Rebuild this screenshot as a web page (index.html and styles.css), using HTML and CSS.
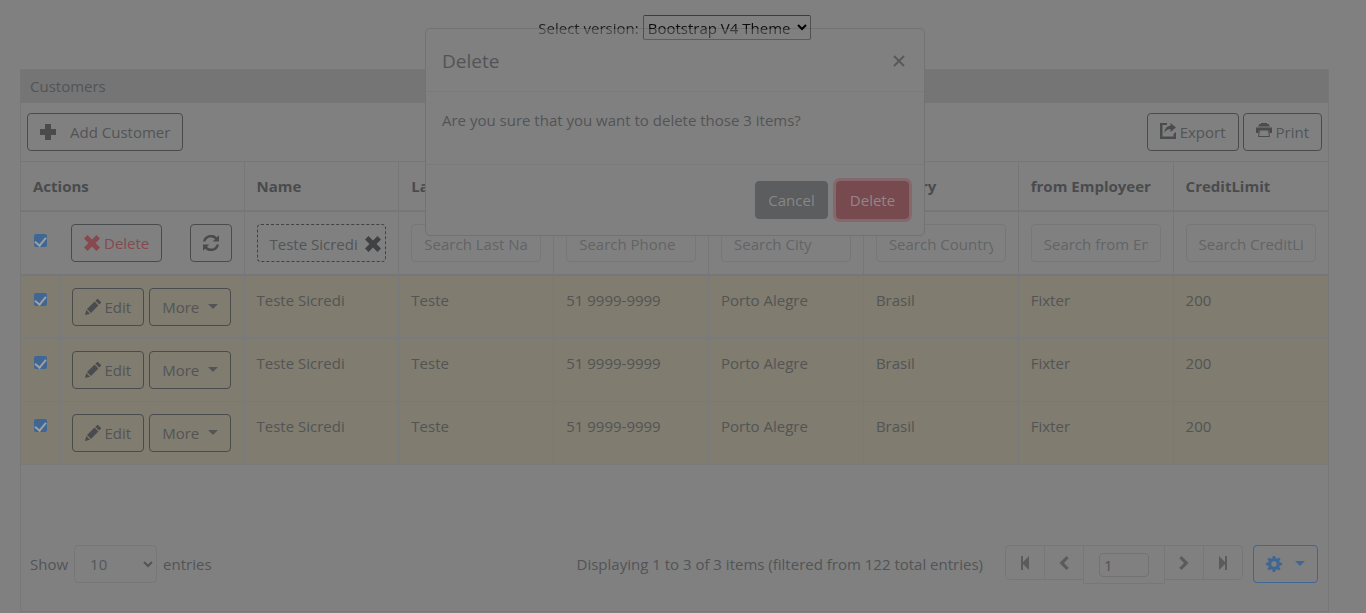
FILE: index.html
```html
<!DOCTYPE html>
<html lang="en">
<head>
<meta charset="utf-8">
<title>Customers</title>
<link rel="stylesheet" href="styles.css">
</head>
<body>
<svg class="defs" aria-hidden="true">
  <symbol id="plus" viewBox="0 0 16 16"><path d="M5 0h6v5h5v6h-5v5H5v-5H0V5h5z"/></symbol>
  <symbol id="cross" viewBox="0 0 16 16"><path d="M3.500 0 8 4.500 12.500 0 16 3.500 11.500 8 16 12.500 12.500 16 8 11.500 3.500 16 0 12.500 4.500 8 0 3.500z"/></symbol>
  <symbol id="refresh" viewBox="0 0 16 16"><path d="M0 6.500A8 8 0 0 1 13.700 2.300L16 .2V6.500H9.700l2.300-2.300A5.700 5.700 0 0 0 2.400 6.500zM16 9.500A8 8 0 0 1 2.300 13.700L0 15.800V9.500h6.300L4 11.800A5.700 5.700 0 0 0 13.600 9.500z"/></symbol>
  <symbol id="pencil" viewBox="0 0 16 16"><path d="M0 16l1.300-5L5 14.700zM2 10l7.600-7.400 3.800 3.800L6 14zM10.400 1.800 12.200 0H13l3 3v.8l-1.800 1.800z"/></symbol>
  <symbol id="export" viewBox="0 0 16 16"><path d="M0 0h7v2H2.500v11.500h11V11L16 9v7H0z"/><path d="M10.500 0 16 4.500 10.500 9V6C7.500 6 6 7.500 4.500 10 4.500 6 6.500 3 10.500 2.800z"/></symbol>
  <symbol id="print" viewBox="0 0 16 16"><path d="M5 0h6v1h1.500L14 3.500H2L3.500 1H5zM0 4.500h16V10h-2.500L13 7.500H3L2.500 10H0z"/><path d="M3.500 7.500 2.500 13.500h11l-1-6" fill="none" stroke="currentColor"/></symbol>
  <symbol id="first" viewBox="0 0 16 16"><path d="M4 1h2v6l6-6v14L6 9v6H4z"/></symbol>
  <symbol id="last" viewBox="0 0 16 16"><path d="M12 1h-2v6L4 1v14l6-6v6h2z"/></symbol>
  <symbol id="prev" viewBox="0 0 16 16"><path d="m10.500 1 2.200 2.200L8 8l4.700 4.800-2.200 2.200-7-7z"/></symbol>
  <symbol id="next" viewBox="0 0 16 16"><path d="M5.500 1 3.300 3.200 8 8l-4.700 4.800L5.500 15l7-7z"/></symbol>
  <symbol id="gear" viewBox="0 0 16 16"><path fill-rule="evenodd" d="M6.700 0h2.600l.4 2.200 1.400.6L13 1.500 14.600 3.200 13.200 5l.6 1.400 2.200.4v2.500l-2.200.4-.6 1.400 1.400 1.800-1.700 1.700-1.800-1.400-1.400.6L9.300 16H6.700l-.4-2.200-1.400-.6-1.800 1.400-1.700-1.700 1.400-1.800-.6-1.400L0 9.300V6.800l2.200-.4L2.800 5 1.400 3.200l1.700-1.700 1.800 1.300 1.400-.6zM8 5.300a2.700 2.700 0 1 0 0 5.400 2.700 2.700 0 0 0 0-5.400z"/></symbol>
  <symbol id="chevron" viewBox="0 0 10 8"><path d="M1 2l4 4 4-4" fill="none" stroke="currentColor" stroke-width="2"/></symbol>
</svg>

<div class="version">
  <label for="version">Select version:</label>
  <span class="select-box version-box"><select id="version"><option>Bootstrap V4 Theme</option></select><svg class="arrow"><use href="#chevron"/></svg></span>
</div>

<main class="panel">
  <h1 class="panel-title">Customers</h1>
  <div class="toolbar">
    <button class="btn add"><svg class="icon"><use href="#plus"/></svg>Add Customer</button>
    <div class="tools">
      <button class="btn"><svg class="icon raised"><use href="#export"/></svg>Export</button>
      <button class="btn"><svg class="icon raised"><use href="#print"/></svg>Print</button>
    </div>
  </div>
  <table class="grid">
    <colgroup><col class="col-check"><col class="col-actions"><col><col><col><col><col><col><col></colgroup>
    <thead>
      <tr><th colspan="2">Actions</th><th>Name</th><th>Last Name</th><th>Phone</th><th>City</th><th>Country</th><th>from Employeer</th><th>CreditLimit</th></tr>
      <tr class="filters">
        <td colspan="2"><div class="bulk"><input type="checkbox" class="check" aria-label="Select all" checked><button class="btn danger-text"><svg class="icon"><use href="#cross"/></svg>Delete</button><button class="btn refresh" aria-label="Refresh"><svg class="icon"><use href="#refresh"/></svg></button></div></td>
        <td><button class="filter-tag">Teste Sicredi<svg class="icon"><use href="#cross"/></svg></button></td>
        <td><input class="search" aria-label="Search Last Name" placeholder="Search Last Name"></td>
        <td><input class="search" aria-label="Search Phone" placeholder="Search Phone"></td>
        <td><input class="search" aria-label="Search City" placeholder="Search City"></td>
        <td><input class="search" aria-label="Search Country" placeholder="Search Country"></td>
        <td><input class="search" aria-label="Search from Employeer" placeholder="Search from Employeer"></td>
        <td><input class="search" aria-label="Search CreditLimit" placeholder="Search CreditLimit"></td>
      </tr>
    </thead>
    <tbody>
      <tr><td><input type="checkbox" class="check" aria-label="Select row 1" checked></td><td><div class="row-actions"><button class="btn"><svg class="icon"><use href="#pencil"/></svg>Edit</button><button class="btn more">More<span class="caret"></span></button></div></td><td>Teste Sicredi</td><td>Teste</td><td>51 9999-9999</td><td>Porto Alegre</td><td>Brasil</td><td>Fixter</td><td>200</td></tr>
      <tr><td><input type="checkbox" class="check" aria-label="Select row 2" checked></td><td><div class="row-actions"><button class="btn"><svg class="icon"><use href="#pencil"/></svg>Edit</button><button class="btn more">More<span class="caret"></span></button></div></td><td>Teste Sicredi</td><td>Teste</td><td>51 9999-9999</td><td>Porto Alegre</td><td>Brasil</td><td>Fixter</td><td>200</td></tr>
      <tr><td><input type="checkbox" class="check" aria-label="Select row 3" checked></td><td><div class="row-actions"><button class="btn"><svg class="icon"><use href="#pencil"/></svg>Edit</button><button class="btn more">More<span class="caret"></span></button></div></td><td>Teste Sicredi</td><td>Teste</td><td>51 9999-9999</td><td>Porto Alegre</td><td>Brasil</td><td>Fixter</td><td>200</td></tr>
    </tbody>
  </table>
  <div class="footer">
    <div class="length"><label for="length">Show</label><span class="select-box length-box"><select id="length"><option>10</option></select><svg class="arrow"><use href="#chevron"/></svg></span><span>entries</span></div>
    <div class="paging">
      <span class="summary">Displaying 1 to 3 of 3 items (filtered from 122 total entries)</span>
      <nav class="pager" aria-label="Pages">
        <button class="page" aria-label="First"><svg class="icon"><use href="#first"/></svg></button>
        <button class="page" aria-label="Previous"><svg class="icon"><use href="#prev"/></svg></button>
        <span class="page-number"><input aria-label="Page" value="1"></span>
        <button class="page" aria-label="Next"><svg class="icon"><use href="#next"/></svg></button>
        <button class="page" aria-label="Last"><svg class="icon"><use href="#last"/></svg></button>
      </nav>
      <button class="btn settings" aria-label="Settings"><svg class="icon"><use href="#gear"/></svg><span class="caret"></span></button>
    </div>
  </div>
</main>

<div class="modal" role="dialog" aria-labelledby="modal-title">
  <div class="modal-head"><h2 id="modal-title">Delete</h2><button class="close" aria-label="Close"><svg viewBox="0 0 12 12"><path d="M1 1l10 10M11 1 1 11"/></svg></button></div>
  <p class="modal-body">Are you sure that you want to delete those 3 items?</p>
  <div class="modal-foot"><button class="btn cancel">Cancel</button><button class="btn delete">Delete</button></div>
</div>
</body>
</html>
```

FILE: styles.css
```css
:root {
  --bg: #808080;
  --line: #777777;
  --cell-line: #77797c;
  --text: #525456;
  --dark: #494b4d;
  --blue: #406694;
}
* { box-sizing: border-box; }
body {
  margin: 0;
  min-height: 100vh;
  overflow: hidden;
  background: var(--bg);
  color: var(--text);
  font: 15px/24px "Open Sans", "Noto Sans", sans-serif;
}
button, input, select { font: inherit; color: inherit; margin: 0; }
.defs { position: absolute; width: 0; height: 0; }
.icon { width: 16px; height: 16px; fill: currentColor; color: var(--dark); flex: none; }
.raised { margin-bottom: 3px; }

.version {
  position: relative;
  z-index: 3;
  display: flex;
  justify-content: center;
  align-items: center;
  gap: 4px;
  padding: 15px 17px 0 0;
  color: #000;
}
.version label {
  color: transparent;
  background: linear-gradient(#1c1c1c 55%, #4c4c4c 55%);
  background-clip: text;
}
.select-box { position: relative; display: inline-flex; }
.select-box select {
  appearance: none;
  width: 100%;
  border: 1px solid var(--line);
  border-radius: 4px;
  background: transparent;
}
.arrow { position: absolute; right: 4px; top: 50%; width: 10px; height: 8px; margin-top: -4px; pointer-events: none; }
.version-box .arrow { margin-top: -5px; }
.version-box select {
  width: 168px;
  height: 25px;
  padding: 0 4px;
  border-color: #3c3c3c #505050 #5c5c5c;
  border-radius: 2px;
  color: transparent;
  background: linear-gradient(#0c0c0c 55%, #3c3c3c 55%);
  background-clip: text;
}
.version-box option { color: #000; }

.panel {
  margin: 29px 37px 0 20px;
  border: 1px solid var(--line);
}
.panel-title {
  margin: 0;
  padding: 4px 9px 5px;
  background: #757575;
  font-size: 15px;
  font-weight: 400;
}
.toolbar { display: flex; justify-content: space-between; padding: 10px 6px; }
.tools { display: flex; gap: 4px; }
.btn {
  display: inline-flex;
  align-items: center;
  justify-content: center;
  gap: 4px;
  height: 38px;
  padding: 0 12px;
  border: 1px solid var(--dark);
  border-radius: 4px;
  background: transparent;
}
.add { gap: 14px; }

.grid { width: 100%; table-layout: fixed; border-collapse: collapse; }
.col-check { width: 39px; }
.col-actions { width: 184px; }
.grid th, .grid td {
  padding: 12px;
  border: 1px solid var(--line);
  text-align: left;
  vertical-align: top;
}
.grid th { font-weight: 700; color: var(--dark); border-bottom-width: 2px; }
.grid tr > :first-child { border-left: 0; }
.grid tr > :last-child { border-right: 0; }
.grid tbody tr { background: #807c6f; }
.grid tbody td { height: 63px; border-color: var(--cell-line); }
.grid tbody td:nth-child(2) { padding-left: 11px; }
.grid thead tr:last-child td { border-bottom-width: 2px; }
.check {
  appearance: none;
  display: flex;
  align-items: flex-start;
  justify-content: center;
  flex: none;
  width: 13px;
  height: 13px;
  margin: 5px 0 0 1px;
  padding-top: 1px;
  border-radius: 2px;
  background: var(--blue);
}
.check::after {
  content: "";
  width: 5px;
  height: 9px;
  border: solid #a0a0a0;
  border-width: 0 2px 2px 0;
  transform: rotate(40deg);
}
.bulk { display: flex; align-items: flex-start; }
.bulk .check { margin-top: 10px; }
.danger-text, .danger-text .icon { color: #85494f; }
.danger-text { margin-left: 24px; }
.refresh { margin-left: auto; }
.row-actions { display: flex; gap: 5px; }
.more { gap: 9px; }
.caret { width: 0; border: solid transparent; border-width: 5px 5px 0; border-top-color: currentColor; margin-bottom: 2px; }
.filter-tag {
  display: flex;
  align-items: center;
  justify-content: space-between;
  width: 100%;
  height: 38px;
  padding: 2px 4px 0 12px;
  border: 1px dashed #404244;
  border-radius: 4px;
  background: transparent;
  white-space: nowrap;
}
.filter-tag .icon { color: #3f4143; }
.search {
  display: block;
  width: 100%;
  height: 38px;
  padding: 2px 12px 0;
  border: 1px solid var(--line);
  border-radius: 4px;
  background: transparent;
}
.search::placeholder { color: #626466; opacity: 1; }

.footer { display: flex; justify-content: space-between; padding: 80px 10px 28px 9px; }
.length { display: flex; align-items: center; gap: 6px; }
.length-box select { width: 83px; height: 38px; padding: 0 15px; color: #555759; }
.paging { display: flex; align-items: center; }
.summary { margin-right: 22px; }
.pager { display: flex; align-items: flex-start; height: 38px; margin-right: 10px; }
.page {
  display: flex;
  align-items: center;
  justify-content: center;
  width: 40px;
  height: 35px;
  margin-right: -1px;
  padding: 0;
  border: 1px solid var(--line);
  background: transparent;
}
.page .icon { color: #595b5d; }
.page:first-child { border-radius: 4px 0 0 4px; }
.page:last-child { border-radius: 0 4px 4px 0; margin-right: 0; }
.page-number { height: 39px; margin-right: -1px; padding: 7px 15px; border: 1px solid var(--line); }
.page-number input {
  display: block;
  width: 50px;
  height: 24px;
  padding: 0 4px;
  border: 1px solid #727272;
  border-radius: 4px;
  background: transparent;
}
.settings { gap: 13px; border-color: var(--blue); color: var(--blue); }
.settings .icon { color: var(--blue); }

.modal {
  position: absolute;
  z-index: 2;
  top: 28px;
  left: 50%;
  width: 500px;
  margin-left: -258px;
  border: 1px solid #727272;
  border-radius: 5px;
  background: var(--bg);
}
.modal-head { display: flex; justify-content: space-between; padding: 16px 19px 14px 16px; border-bottom: 1px solid #7a7a7a; }
.modal-head h2 { margin: 0; font-size: 19px; line-height: 32px; font-weight: 500; }
.close { display: flex; align-items: center; padding: 0; border: 0; background: transparent; }
.close svg { width: 12px; height: 12px; fill: none; stroke: #58595b; stroke-width: 2; }
.modal-body { margin: 0; padding: 16px 16px 32px; }
.modal-foot { display: flex; justify-content: flex-end; gap: 8px; padding: 16px 15px; border-top: 1px solid #7a7a7a; }
.cancel, .delete { min-width: 73px; padding: 0 11px; }
.cancel { background: #5b5d5f; border-color: #5b5d5f; color: #858789; }
.delete { background: #774a50; border-color: #774a50; color: #958587; box-shadow: 0 0 0 3px #85686c; }
```
